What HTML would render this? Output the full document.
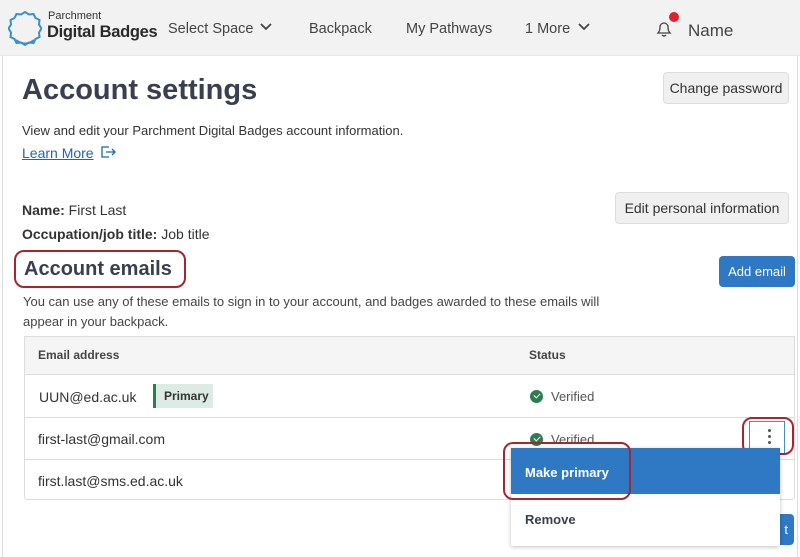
<!DOCTYPE html>
<html><head><meta charset="utf-8"><style>
*{box-sizing:border-box;margin:0;padding:0}
body{width:800px;height:557px;overflow:hidden;background:#fff;font-family:"Liberation Sans",sans-serif;color:#333;position:relative}
.hdr{position:absolute;left:0;top:0;width:800px;height:56px;background:#f2f2f2;border-bottom:1px solid #e6e6e6}
.a{position:absolute;white-space:nowrap}
.nav{font-size:14.5px;color:#444;top:21px}
.frame{position:absolute;left:2px;top:56px;width:796px;height:501px;border-left:1px solid #ddd;border-right:1px solid #ddd}
.btn{position:absolute;background:#f0f0f0;border:1px solid #ddd;border-radius:4px;font-size:14px;color:#333;text-align:center}
.red{position:absolute;border:2px solid #a52630;border-radius:10px}
.row{position:absolute;left:24px;width:771px;border-bottom:1px solid #ddd}
.chk{display:inline-block;width:13px;height:13px;border-radius:50%;background:#2d7d52;vertical-align:-2px;margin-right:8px;position:relative}
.chk:after{content:"";position:absolute;left:3.5px;top:3px;width:5px;height:3px;border-left:1.6px solid #fff;border-bottom:1.6px solid #fff;transform:rotate(-45deg)}
</style></head><body>
<div class="hdr"></div>
<svg class="a" style="left:8px;top:9px" width="34" height="38" viewBox="0 0 34 38"><path d="M17 3 l4 2.5 4.5-.5 2 4 4 2-.5 4.5 2.5 4-2.5 4 .5 4.5-4 2-2 4-4.5-.5-4 2.5-4-2.5-4.5.5-2-4-4-2 .5-4.5-2.5-4 2.5-4-.5-4.5 4-2 2-4 4.5.5z" fill="none" stroke="#3a8fd0" stroke-width="2"/><path d="M8 31 q9 7 18 0" fill="none" stroke="#3a8fd0" stroke-width="2"/></svg>
<div class="a" style="left:48px;top:10px;font-size:11px;color:#333">Parchment</div>
<div class="a" style="left:47px;top:23px;font-size:16.5px;color:#2a2a2a;font-weight:bold;letter-spacing:-0.3px">Digital Badges</div>
<div class="a nav" style="left:168px">Select Space</div>
<svg class="a" style="left:259px;top:22px" width="14" height="10"><path d="M2 2l5 5 5-5" fill="none" stroke="#444" stroke-width="1.8"/></svg>
<div class="a nav" style="left:309px">Backpack</div>
<div class="a nav" style="left:406px">My Pathways</div>
<div class="a nav" style="left:525px">1 More</div>
<svg class="a" style="left:577px;top:22px" width="14" height="10"><path d="M2 2l5 5 5-5" fill="none" stroke="#444" stroke-width="1.8"/></svg>
<svg class="a" style="left:654px;top:18px" width="20" height="20"><path d="M4 15 q2-2 2-6 a4 4 0 0 1 8 0 q0 4 2 6z M8 17 q2 2 4 0" fill="none" stroke="#444" stroke-width="1.3"/></svg>
<div class="a" style="left:669px;top:12px;width:10px;height:10px;border-radius:50%;background:#e0202b"></div>
<div class="a" style="left:688px;top:21px;font-size:17px;color:#444">Name</div>
<div class="frame"></div>
<div class="a" style="left:22px;top:74px;font-size:29px;font-weight:bold;color:#3a3f4f">Account settings</div>
<div class="btn" style="left:663px;top:72px;width:126px;height:32px;line-height:30px">Change password</div>
<div class="a" style="left:22px;top:123px;font-size:13px;color:#333">View and edit your Parchment Digital Badges account information.</div>
<div class="a" style="left:22px;top:145px;font-size:14px;color:#1f66b0;text-decoration:underline">Learn More</div>
<svg class="a" style="left:100px;top:145px" width="16" height="14"><path d="M9 2H2v10h7 M6 7h9 M12 4l3 3-3 3" fill="none" stroke="#1f66b0" stroke-width="1.3"/></svg>
<div class="a" style="left:22px;top:202px;font-size:14px"><b>Name:</b> First Last</div>
<div class="a" style="left:22px;top:226px;font-size:14px"><b>Occupation/job title:</b> Job title</div>
<div class="btn" style="left:615px;top:192px;width:174px;height:32px;line-height:30px">Edit personal information</div>
<div class="a" style="left:24px;top:258px;font-size:20px;font-weight:bold;color:#3a3f4f">Account emails</div>
<div class="red" style="left:14px;top:250px;width:172px;height:38px"></div>
<div class="a" style="left:719px;top:256px;width:76px;height:31px;background:#2f78c4;border-radius:4px;color:#fff;font-size:13px;line-height:31px;text-align:center">Add email</div>
<div class="a" style="left:23px;top:292px;font-size:13px;line-height:20px;color:#444">You can use any of these emails to sign in to your account, and badges awarded to these emails will<br>appear in your backpack.</div>
<div class="a" style="left:24px;top:336px;width:771px;height:164px;border:1px solid #ddd;border-radius:3px"></div>
<div class="row" style="top:336px;height:39px;background:#f5f5f5;border-top:1px solid #ddd;border-left:1px solid #ddd;border-right:1px solid #ddd"></div>
<div class="a" style="left:38px;top:348px;font-size:12px;font-weight:bold;color:#444">Email address</div>
<div class="a" style="left:529px;top:348px;font-size:12px;font-weight:bold;color:#444">Status</div>
<div class="row" style="top:375px;height:43px"></div>
<div class="row" style="top:418px;height:42px"></div>
<div class="a" style="left:39px;top:389px;font-size:14px">UUN@ed.ac.uk</div>
<div class="a" style="left:153px;top:384px;width:60px;height:24px;background:#dcebe4;border-left:3px solid #2d7d52;font-size:12px;font-weight:bold;line-height:24px;padding-left:8px;color:#333">Primary</div>
<div class="a" style="left:530px;top:389px;font-size:13px;color:#555"><span class="chk"></span>Verified</div>
<div class="a" style="left:38px;top:431px;font-size:14px">first-last@gmail.com</div>
<div class="a" style="left:530px;top:432px;font-size:13px;color:#555"><span class="chk"></span>Verified</div>
<div class="a" style="left:38px;top:473px;font-size:14px">first.last@sms.ed.ac.uk</div>
<div class="a" style="left:749px;top:421px;width:36px;height:33px;border:1px solid #4a8cc9;background:#fff"></div>
<div class="a" style="left:768px;top:429px;width:3px;height:3px;border-radius:50%;background:#555;box-shadow:0 6px 0 #555,0 12px 0 #555"></div>
<div class="red" style="left:742px;top:417px;width:52px;height:38px"></div>
<div class="a" style="left:760px;top:514px;width:34px;height:31px;background:#2f78c4;border-radius:4px;color:#fff;font-size:13px;line-height:31px;text-align:right;padding-right:6px">t</div>
<div class="a" style="left:511px;top:448px;width:269px;height:98px;background:#fff;box-shadow:0 1px 4px rgba(0,0,0,.25);border-radius:2px"></div>
<div class="a" style="left:511px;top:448px;width:269px;height:46px;background:#2f78c4"></div>
<div class="a" style="left:525px;top:465px;font-size:13px;font-weight:bold;color:#fff">Make primary</div>
<div class="a" style="left:525px;top:512px;font-size:13px;font-weight:bold;color:#3a3f4f">Remove</div>
<div class="red" style="left:503px;top:442px;width:128px;height:58px"></div>
</body></html>
